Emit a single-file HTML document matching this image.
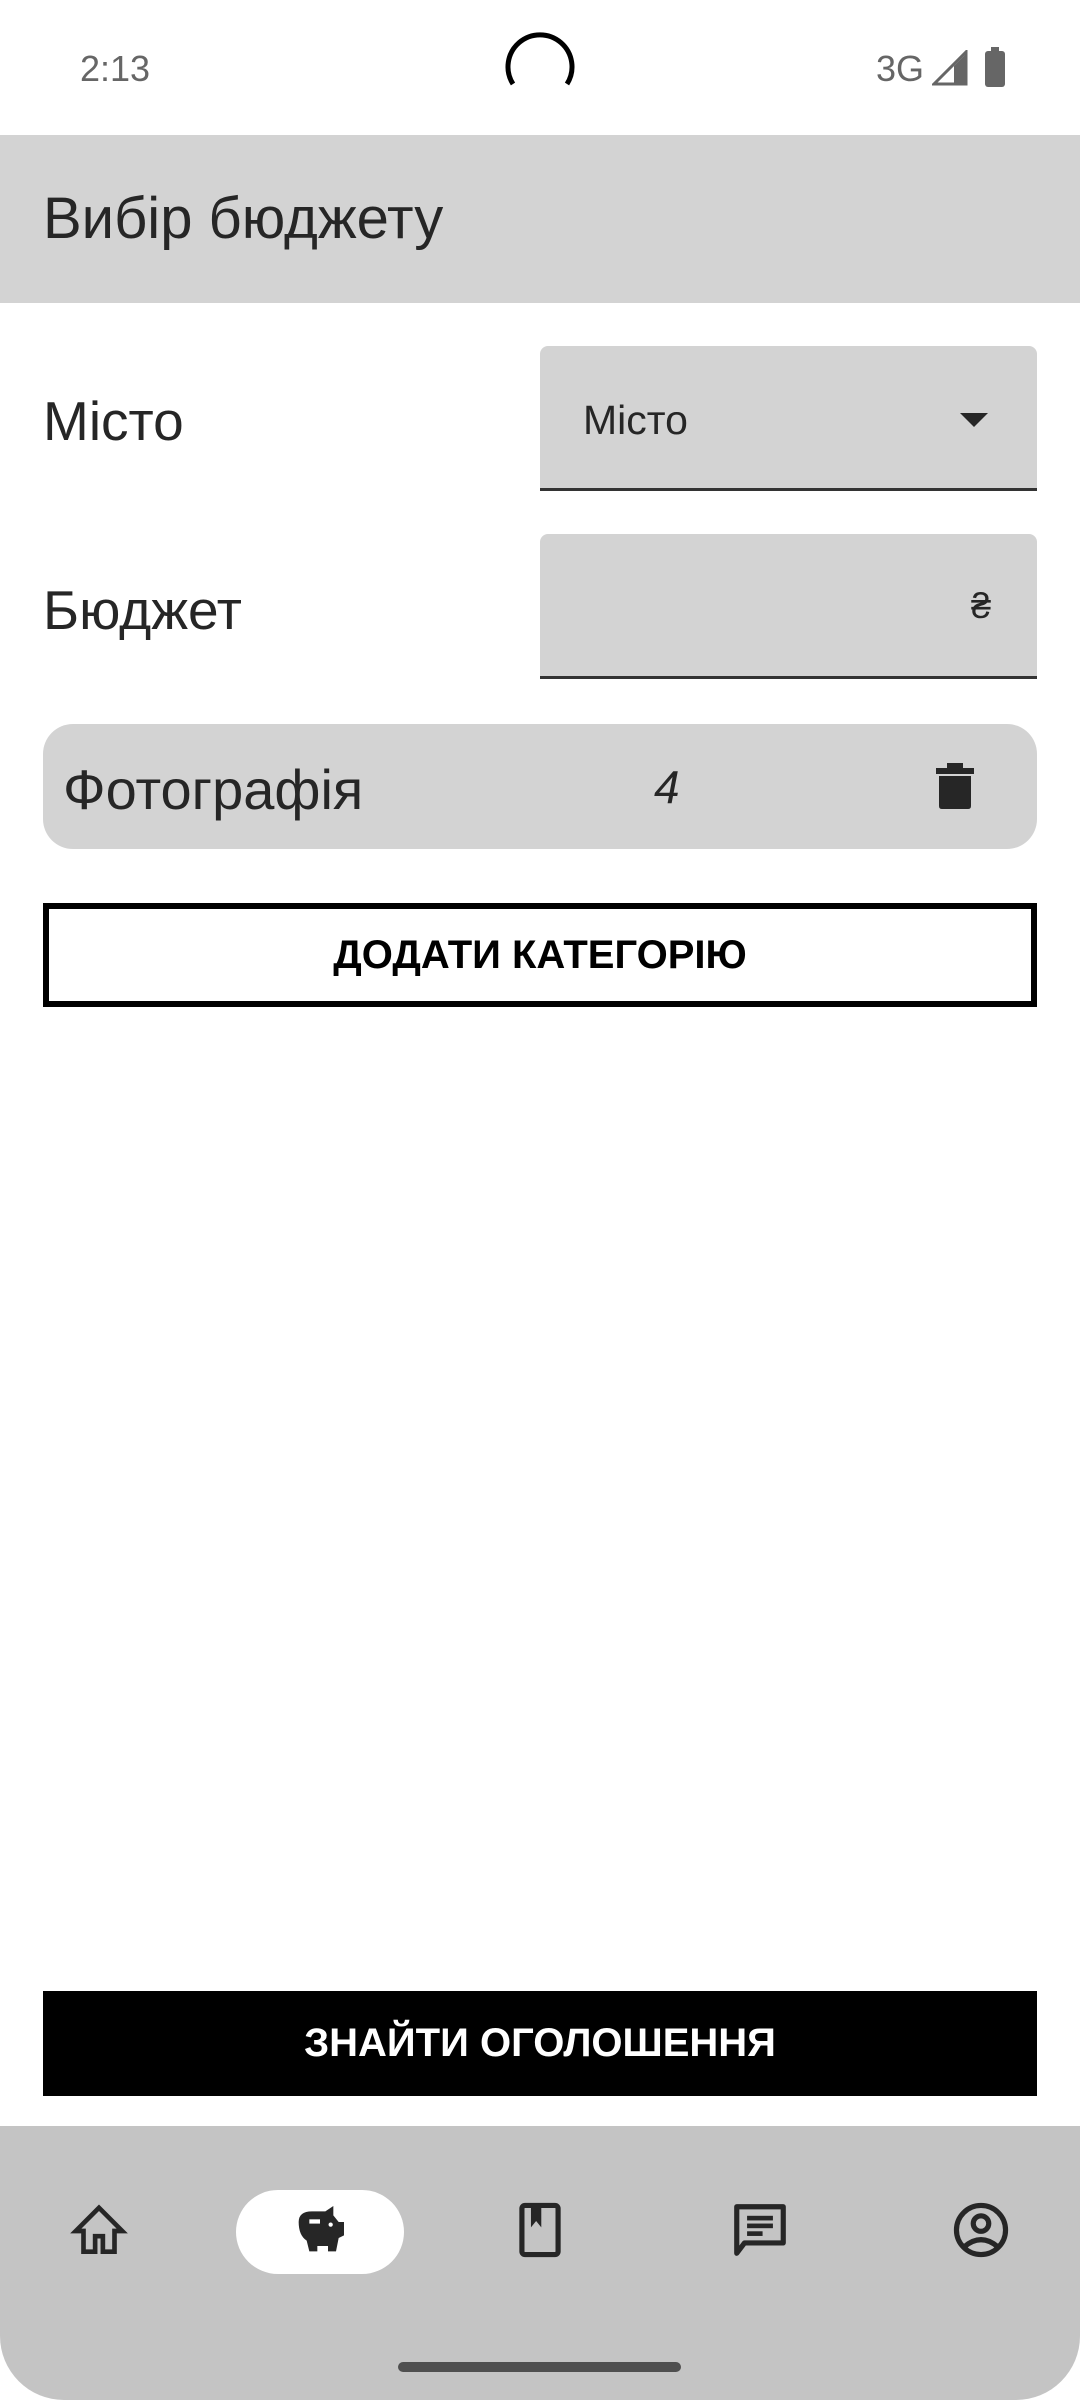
<!DOCTYPE html>
<html><head><meta charset="utf-8"><style>
*{margin:0;padding:0;box-sizing:border-box}
body{width:1080px;height:2400px;background:#fff;position:relative;overflow:hidden;font-family:"Liberation Sans","DejaVu Sans",sans-serif;color:#262626}
.a{position:absolute}
.lbl{font-size:55px;color:#262626}
</style></head><body>
<!-- status bar -->
<div class="a" style="left:80px;top:48px;font-size:36px;color:#666">2:13</div>
<svg class="a" style="left:503px;top:30px" width="74" height="74" viewBox="0 0 74 74"><path d="M10 54 A32 32 0 1 1 64 54" fill="none" stroke="#000" stroke-width="5"/></svg>
<div class="a" style="left:876px;top:48px;font-size:36px;color:#666">3G</div>
<svg class="a" style="left:932px;top:50px" width="36" height="36" viewBox="0 0 36 36"><path d="M2 34 L34 2 V34 Z" fill="none" stroke="#666" stroke-width="3"/><path d="M22 34 V16 L34 4 V34Z" fill="#666"/></svg>
<div class="a" style="left:985px;top:51px;width:20px;height:36px;background:#666;border-radius:3px"></div>
<div class="a" style="left:991px;top:47px;width:8px;height:5px;background:#666"></div>
<!-- app bar -->
<div class="a" style="left:0;top:135px;width:1080px;height:168px;background:#d3d3d3"></div>
<div class="a" style="left:43px;top:185px;font-size:58px;color:#262626">Вибір бюджету</div>
<!-- rows -->
<div class="a lbl" style="left:43px;top:389px">Місто</div>
<div class="a" style="left:540px;top:346px;width:497px;height:145px;background:#d3d3d3;border-radius:8px 8px 0 0;border-bottom:3px solid #333"></div>
<div class="a" style="left:583px;top:397px;font-size:41px;color:#262626">Місто</div>
<svg class="a" style="left:960px;top:413px" width="30" height="16"><path d="M0 0 H28 L14 14Z" fill="#262626"/></svg>
<div class="a lbl" style="left:43px;top:578px">Бюджет</div>
<div class="a" style="left:540px;top:534px;width:497px;height:145px;background:#d3d3d3;border-radius:8px 8px 0 0;border-bottom:3px solid #333"></div>
<div class="a" style="left:971px;top:585px;font-size:36px;color:#262626">₴</div>
<div class="a" style="left:43px;top:724px;width:994px;height:125px;background:#d3d3d3;border-radius:30px"></div>
<div class="a lbl" style="left:63px;top:757px;font-size:56px">Фотографія</div>
<div class="a" style="left:654px;top:760px;font-size:46px;font-style:italic;color:#262626">4</div>
<svg class="a" style="left:935px;top:760px" width="40" height="50" viewBox="0 0 40 50"><path d="M1 8 H39 V14 H1Z M12 8 V3 H28 V8Z" fill="#262626"/><path d="M4 16 H36 V46 Q36 49 33 49 H7 Q4 49 4 46Z" fill="#262626"/></svg>
<!-- outlined button -->
<div class="a" style="left:43px;top:903px;width:994px;height:104px;border:6px solid #000;display:flex;align-items:center;justify-content:center;font-size:40px;font-weight:600;color:#000">ДОДАТИ КАТЕГОРІЮ</div>
<!-- black button -->
<div class="a" style="left:43px;top:1991px;width:994px;height:105px;background:#000;display:flex;align-items:center;justify-content:center;font-size:40px;font-weight:600;color:#fff">ЗНАЙТИ ОГОЛОШЕННЯ</div>
<!-- bottom nav -->
<div class="a" style="left:0;top:2126px;width:1080px;height:274px;background:#c4c4c4;border-radius:0 0 64px 64px"></div>
<div class="a" style="left:236px;top:2190px;width:168px;height:84px;background:#fff;border-radius:42px"></div>
<svg class="a" style="left:68px;top:2200px" width="62" height="62" viewBox="0 0 24 24"><path d="M12 3 L3 12 H6 V20 H10.5 V14 H13.5 V20 H18 V12 H21Z" fill="none" stroke="#262626" stroke-width="1.8" stroke-linejoin="miter"/></svg>
<svg class="a" style="left:286px;top:2198px" width="68" height="64" viewBox="0 0 24 24"><path d="M4 9 Q4 5 9 5 H14 L17 3 V6.5 L19 9 H21 V14 L19 15 L18 20 H15 V18 H11 V20 H8 L7 16 Q4 14 4 9Z" fill="#262626"/><rect x="8" y="8" width="4" height="1.6" fill="#fff"/><circle cx="16" cy="10" r="0.8" fill="#fff"/></svg>
<svg class="a" style="left:509px;top:2198px" width="62" height="64" viewBox="0 0 24 24"><rect x="5" y="2.5" width="14" height="19" rx="1.2" fill="none" stroke="#262626" stroke-width="2"/><path d="M8.5 3 V11 L10.5 8.5 L12.5 11 V3" fill="#262626"/></svg>
<svg class="a" style="left:729px;top:2199px" width="62" height="62" viewBox="0 0 24 24"><path d="M3 3 H21 V17 H6 L3 21Z" fill="none" stroke="#262626" stroke-width="2" stroke-linejoin="round"/><rect x="7" y="6.5" width="10" height="1.8" fill="#262626"/><rect x="7" y="9.5" width="10" height="1.8" fill="#262626"/><rect x="7" y="12.5" width="6" height="1.8" fill="#262626"/></svg>
<svg class="a" style="left:950px;top:2199px" width="62" height="62" viewBox="0 0 24 24"><circle cx="12" cy="12" r="9.5" fill="none" stroke="#262626" stroke-width="2"/><circle cx="12" cy="9.5" r="3" fill="none" stroke="#262626" stroke-width="2"/><path d="M5.5 18.5 Q12 13 18.5 18.5" fill="none" stroke="#262626" stroke-width="2"/></svg>
<div class="a" style="left:398px;top:2362px;width:283px;height:10px;background:#4f4f4f;border-radius:5px"></div>
</body></html>
